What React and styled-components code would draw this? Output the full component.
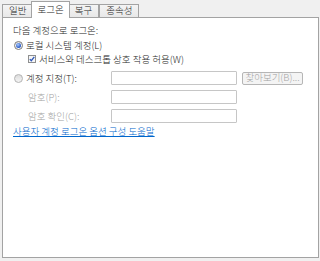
import React from "react";
import styled, { createGlobalStyle } from "styled-components";

const Global = createGlobalStyle`
	html, body {
		margin: 0;
		padding: 0;
		width: 320px;
		height: 261px;
		overflow: hidden;
		background: #f0f0f0;
	}
	body {
		font-family: "Noto Sans CJK KR", "Noto Sans", sans-serif;
		font-size: 9.5px;
		font-weight: 300;
		color: #262626;
	}
`;

const Window = styled.div`
	padding: 1px 1px 0 2px;
	display: flex;
	flex-direction: column;
`;

const TabBar = styled.div`
	display: flex;
	align-items: flex-end;
	height: 16px;
`;

const Tab = styled.div`
	position: relative;
	box-sizing: border-box;
	display: flex;
	align-items: center;
	justify-content: center;
	padding: 0 ${(p) => (p.$active ? 5 : 6)}px;
	height: ${(p) => (p.$active ? 17 : 13)}px;
	margin: 0 ${(p) => (p.$active ? -2 : 0)}px -${(p) => (p.$active ? 1 : 0)}px;
	z-index: ${(p) => (p.$active ? 1 : 0)};
	border: 1px solid #a3a3a3;
	border-bottom: none;
	background: ${(p) =>
		p.$active ? "#ffffff" : "linear-gradient(#f4f4f4, #e8e8e8)"};
	line-height: 1;
	white-space: nowrap;
`;

const Panel = styled.div`
	box-sizing: border-box;
	height: 241px;
	border: 1px solid #a3a3a3;
	background: #ffffff;
	padding: 6px 10px 0;
	display: flex;
	flex-direction: column;
`;

const Line = styled.div`
	height: 12px;
	line-height: 12px;
	margin-top: ${(p) => p.$gap || 0}px;
	margin-left: ${(p) => p.$indent || 0}px;
	display: flex;
	align-items: center;
	gap: 3px;
	white-space: nowrap;
`;

const Radio = styled.span`
	box-sizing: border-box;
	width: 9px;
	height: 9px;
	border-radius: 50%;
	border: 1px solid ${(p) => (p.$on ? "#7b7b7b" : "#b4b4b4")};
	background: ${(p) =>
		p.$on ? "linear-gradient(#e4e4e4, #ffffff)" : "linear-gradient(#dcdcdc, #f4f4f4)"};
	display: flex;
	align-items: center;
	justify-content: center;
	flex: none;
	&::after {
		content: "";
		display: ${(p) => (p.$on ? "block" : "none")};
		width: 5px;
		height: 5px;
		border-radius: 50%;
		background: radial-gradient(circle at 40% 35%, #a9cbff, #2456c6 70%);
	}
`;

const Check = styled.span`
	box-sizing: border-box;
	width: 8px;
	height: 8px;
	border: 1px solid #8e8f8f;
	background: #f6f6f6;
	display: flex;
	flex: none;
	svg {
		display: block;
	}
`;

const Form = styled.div`
	display: grid;
	grid-template-columns: 93px 126px 61px;
	grid-auto-rows: 14px;
	column-gap: 5px;
	row-gap: 5px;
	margin-top: 6px;
	align-items: center;
`;

const Label = styled.div`
	display: flex;
	align-items: center;
	gap: 3px;
	padding-left: ${(p) => p.$indent || 0}px;
	color: ${(p) => (p.$disabled ? "#a2a2a2" : "#262626")};
	white-space: nowrap;
`;

const Input = styled.div`
	box-sizing: border-box;
	height: 14px;
	border: 1px solid #c6c6c6;
	border-radius: 1px;
	background: #ffffff;
`;

const Button = styled.div`
	box-sizing: border-box;
	height: 13px;
	border: 1px solid #b6b6b6;
	border-radius: 2px;
	background: #f4f4f4;
	color: #a2a2a2;
	display: flex;
	align-items: center;
	justify-content: center;
	white-space: nowrap;
	line-height: 1;
`;

const Link = styled.a`
	margin-top: 2px;
	height: 12px;
	line-height: 12px;
	color: #0066cc;
	text-decoration: underline;
	white-space: nowrap;
	align-self: flex-start;
`;

const tabs = ["일반", "로그온", "복구", "종속성"];

export default function App() {
	return (
		<>
			<Global />
			<Window>
				<TabBar>
					{tabs.map((t, i) => (
						<Tab key={t} $active={i === 1}>
							{t}
						</Tab>
					))}
				</TabBar>
				<Panel>
					<Line>다음 계정으로 로그온:</Line>
					<Line $gap={3} $indent={1}>
						<Radio $on />
						로컬 시스템 계정(L)
					</Line>
					<Line $gap={2} $indent={15}>
						<Check>
							<svg width="6" height="6" viewBox="0 0 6 6">
								<path
									d="M0.8 3.1 L2.3 4.7 L5.3 0.9"
									fill="none"
									stroke="#2d56b8"
									strokeWidth="1.3"
								/>
							</svg>
						</Check>
						서비스와 데스크톱 상호 작용 허용(W)
					</Line>
					<Form>
						<Label $indent={1}>
							<Radio />
							계정 지정(T):
						</Label>
						<Input />
						<Button>찾아보기(B)...</Button>
						<Label $indent={15} $disabled>
							암호(P):
						</Label>
						<Input />
						<span />
						<Label $indent={15} $disabled>
							암호 확인(C):
						</Label>
						<Input />
						<span />
					</Form>
					<Link href="#">사용자 계정 로그온 옵션 구성 도움말</Link>
				</Panel>
			</Window>
		</>
	);
}
